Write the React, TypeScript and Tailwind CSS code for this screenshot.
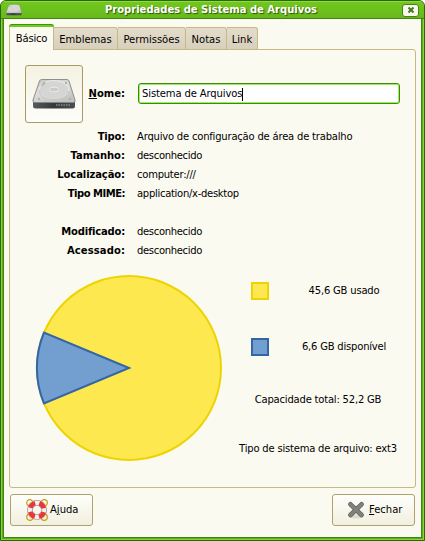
import React from "react";

function Disk({ className }: { className: string }) {
  return (
    <svg className={className} viewBox="0 0 44 32">
      <defs>
        <linearGradient id="top" x1="0" y1="0" x2="0.6" y2="1">
          <stop offset="0" stopColor="#c4c5c2" />
          <stop offset="0.5" stopColor="#dddedb" />
          <stop offset="1" stopColor="#c3c4c1" />
        </linearGradient>
        <linearGradient id="front" x1="0" y1="0" x2="1" y2="0">
          <stop offset="0" stopColor="#555b5d" />
          <stop offset="0.5" stopColor="#343a3c" />
          <stop offset="1" stopColor="#4a5052" />
        </linearGradient>
      </defs>
      <path d="M1 23 L43 23 L43 28 Q43 30.500 40.500 30.500 L3.500 30.500 Q1 30.500 1 28 Z" fill="url(#front)" />
      <path d="M9.500 1.500 H35 Q36.500 1.500 37 3 L43 22 Q43.500 24.500 41.500 24.500 H2.500 Q.5 24.500 1 22 L7.500 3 Q8 1.500 9.500 1.500 Z" fill="url(#top)" stroke="#858783" strokeWidth="0.9" />
      <ellipse cx="22" cy="12" rx="15" ry="9.500" fill="#d5d6d3" stroke="#eeefed" strokeWidth="0.9" />
      <path d="M7.500 12 Q6.500 21 22 21.700 Q36 21 37 13" fill="none" stroke="#b4b6b2" strokeWidth="0.7" />
      <ellipse cx="22" cy="11.500" rx="4.500" ry="2.300" fill="#cbccc9" stroke="#f3f3f2" strokeWidth="0.8" />
      <path d="M9 8 L12 3.500 L14 5 L10 8.500 Z" fill="#b2b4b0" />
      <circle cx="34" cy="5" r="1" fill="#a2a4a0" />
      <circle cx="7" cy="21" r="0.900" fill="#a2a4a0" />
      <circle cx="38" cy="21" r="0.900" fill="#a2a4a0" />
      <path d="M24 27 h14" stroke="#8b908e" strokeWidth="1.500" strokeDasharray="1.400 1.100" />
    </svg>
  );
}

function Lifebuoy() {
  return (
    <svg className="h-[22px] w-[22px] shrink-0" viewBox="0 0 22 22">
      <g fill="none" stroke="#c4a000" strokeWidth="1.200">
        <circle cx="3.800" cy="3.800" r="3.100" />
        <circle cx="18.200" cy="3.800" r="3.100" />
        <circle cx="3.800" cy="18.200" r="3.100" />
        <circle cx="18.200" cy="18.200" r="3.100" />
      </g>
      <circle cx="11" cy="11" r="7.100" fill="none" stroke="#8c7d7a" strokeWidth="5.700" />
      <circle cx="11" cy="11" r="7.100" fill="none" stroke="#f0f0ee" strokeWidth="4.600" />
      <circle cx="11" cy="11" r="7.100" fill="none" stroke="#ea3636" strokeWidth="4.600" strokeDasharray="6.900 4.253" strokeDashoffset="-2.130" />
    </svg>
  );
}

function CloseCross() {
  return (
    <svg className="h-[18px] w-[18px] shrink-0" viewBox="0 0 18 18">
      <ellipse cx="9" cy="15.500" rx="7" ry="2" fill="#dedcd2" />
      <path d="M3.500 3.300 L14.500 14 M14.500 3.300 L3.500 14" stroke="#5f615d" strokeWidth="4.600" strokeLinecap="round" />
      <path d="M3.500 3.300 L14.500 14 M14.500 3.300 L3.500 14" stroke="#80827e" strokeWidth="3.200" strokeLinecap="round" />
    </svg>
  );
}

function Row({ label, value, labelSpacing = "", spacing = "tracking-[-0.32px]" }: { label: string; value: string; labelSpacing?: string; spacing?: string }) {
  return (
    <div className="flex h-[19px] items-center">
      <div className={`w-[115px] text-right font-bold ${labelSpacing}`}>{label}</div>
      <div className={`ml-3 ${spacing}`}>{value}</div>
    </div>
  );
}

const tab = "flex h-[22px] items-center justify-center rounded-tr-[3px] border-t border-r border-[#c5bb82] bg-gradient-to-b from-[#e3dccb] to-[#d8d0bc] pt-[3px]";
const button = "flex h-8 w-[83px] items-center rounded-[3px] border border-[#aea26b] bg-gradient-to-b from-[#fefefb] to-[#f2efdf]";

export default function App() {
  return (
    <div className="flex h-[541px] w-[425px] flex-col overflow-hidden bg-white font-['DejaVu_Sans',sans-serif] text-[10px] leading-[14px] whitespace-nowrap text-black">
      <div className="flex h-full flex-col overflow-hidden rounded-t-[6px] border border-[#2f6509] bg-[#5aae19] shadow-[inset_0_0_0_1px_#82d83a]">
        <div className="flex h-[18px] shrink-0 items-center border-t border-b border-t-[#8ade3f] border-b-[#438510] bg-gradient-to-b from-[#72c71d] to-[#67b91b] px-[5px]">
          <Disk className="h-3 w-4" />
          <div className="flex-1 pr-[2px] text-center font-bold text-white [text-shadow:1px_1px_1px_#2b5508]">Propriedades de Sistema de Arquivos</div>
          <div className="flex h-[13px] w-[17px] items-center justify-center rounded-[3px] border border-[#438510] bg-[#f8f7ef]">
            <svg className="h-[6px] w-[6px]" viewBox="0 0 6 6">
              <path d="M.5 .5 L5.500 5.500 M5.500 .5 L.5 5.500" stroke="#437a17" strokeWidth="2" />
            </svg>
          </div>
        </div>
        <div className="mr-[2px] mb-[2px] ml-[2px] flex flex-1 flex-col border-r border-b border-l border-[#438510] bg-[#fbfaf1] px-[5px] pt-[5px]">
          <div className="relative z-10 -mb-px flex h-[26px] items-end">
            <div className="flex h-[26px] w-[45px] flex-col rounded-t-[4px] border-r border-l border-[#c5bb82] bg-[#fbfaf1]">
              <div className="-mx-px h-[3px] rounded-t-[4px] border-t border-[#3c930a] bg-[#71cb1e]" />
              <div className="flex flex-1 items-center justify-center tracking-[-0.2px]">Básico</div>
            </div>
            <div className={`${tab} mb-px w-[64px]`}>Emblemas</div>
            <div className={`${tab} mb-px w-[68px]`}>Permissões</div>
            <div className={`${tab} mb-px w-[41px]`}>Notas</div>
            <div className={`${tab} mb-px w-[31px]`}>Link</div>
          </div>
          <div className="h-[439px] w-[407px] rounded-r-[3px] rounded-bl-[3px] border border-[#c5bb82]">
            <div className="flex h-[77px] items-center pl-[15px]">
              <div className="mt-[11px] flex h-[58px] w-[58px] shrink-0 items-center justify-center rounded-[3px] border border-[#a79a62] bg-gradient-to-b from-[#f5f2e3] to-[#fdfdf9]">
                <Disk className="h-[32px] w-[44px]" />
              </div>
              <div className="mt-[11px] w-[42px] text-right font-bold"><span className="underline">N</span>ome:</div>
              <div className="mt-[10px] ml-[13px] flex h-[21px] w-[262px] items-center rounded-[3px] border border-[#438510] bg-white pt-px pl-[3px] tracking-[-0.12px] shadow-[inset_0_0_0_1px_#96f453]">
                Sistema de Arquivos<span className="h-[13px] w-px bg-black" />
              </div>
            </div>
            <div className="h-[134px]">
              <Row label="Tipo:" labelSpacing="tracking-[-0.2px]" value="Arquivo de configuração de área de trabalho" spacing="tracking-[-0.2px]" />
              <Row label="Tamanho:" value="desconhecido" />
              <Row label="Localização:" labelSpacing="tracking-[-0.1px]" value="computer:///" spacing="tracking-[-0.24px]" />
              <Row label="Tipo MIME:" labelSpacing="tracking-[-0.5px]" value="application/x-desktop" spacing="tracking-[-0.29px]" />
              <div className="h-[19px]" />
              <Row label="Modificado:" labelSpacing="tracking-[-0.2px]" value="desconhecido" />
              <Row label="Acessado:" labelSpacing="tracking-[0.1px]" value="desconhecido" />
            </div>
            <div className="flex">
              <svg className="mt-[13px] ml-[25px] h-[188px] w-[188px] shrink-0" viewBox="0 0 188 188">
                <circle cx="94" cy="94" r="92" fill="#fde94f" stroke="#edd400" strokeWidth="2" />
                <path d="M94 94 L9 58.500 A92 92 0 0 0 9 129.500 Z" fill="#729fcf" stroke="#3465a4" strokeWidth="2" />
              </svg>
              <div className="flex flex-1 flex-col pt-[21px] pl-[28px] tracking-[-0.2px]">
                <div className="flex h-[18px] items-center">
                  <div className="h-[18px] w-[18px] border-2 border-[#edd400] bg-[#fde94f]" />
                  <div className="w-[150px] text-center">45,6 GB usado</div>
                </div>
                <div className="mt-[38px] flex h-[18px] items-center">
                  <div className="h-[18px] w-[18px] border-2 border-[#3465a4] bg-[#729fcf]" />
                  <div className="w-[150px] text-center">6,6 GB disponível</div>
                </div>
                <div className="mt-[37px] -ml-3 w-[158px] text-center">Capacidade total: 52,2 GB</div>
                <div className="mt-[35px] -ml-[13px] w-[160px] text-center">Tipo de sistema de arquivo: ext3</div>
              </div>
            </div>
          </div>
          <div className="mt-[6px] flex justify-between pr-px pl-px">
            <div className={`${button} gap-[2px] pl-[15px]`}>
              <Lifebuoy />
              <span>A<span className="underline">j</span>uda</span>
            </div>
            <div className={`${button} gap-1 pl-[14px]`}>
              <CloseCross />
              <span><span className="underline">F</span>echar</span>
            </div>
          </div>
        </div>
      </div>
    </div>
  );
}
